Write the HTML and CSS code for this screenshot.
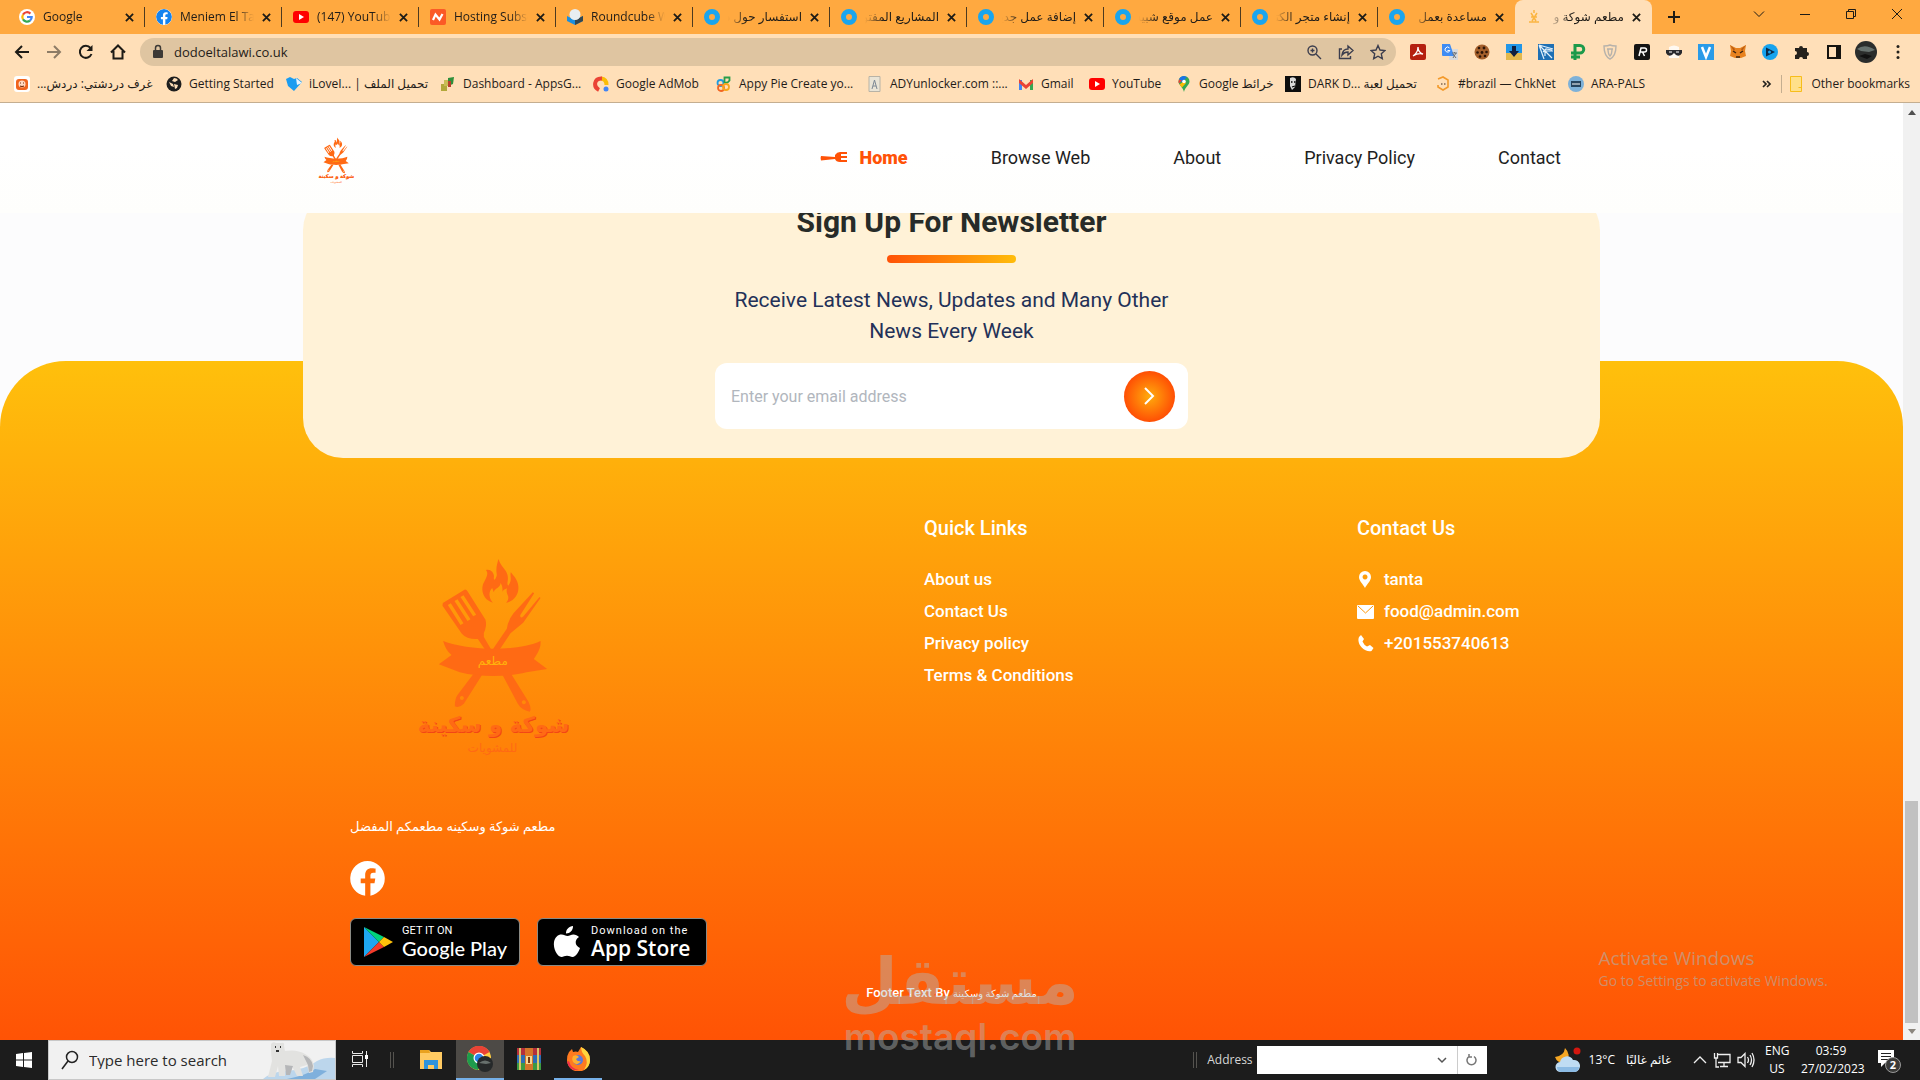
FILE: index.html
```html
<!DOCTYPE html>
<html lang="en">
<head>
<meta charset="utf-8">
<title>مطعم شوكة وسكينة</title>
<link rel="stylesheet" href="styles.css">
</head>
<body>
<svg class="defs" aria-hidden="true">
  <symbol id="x" viewBox="0 0 10 10"><path d="M1 1l8 8M9 1L1 9" stroke="#1d1b16" stroke-width="2" fill="none"/></symbol>
  <symbol id="ring" viewBox="0 0 16 16"><circle cx="8" cy="8" r="5.500" fill="none" stroke="#1aa5ee" stroke-width="5"/></symbol>
  <symbol id="yt" viewBox="0 0 16 16"><rect y="2" width="16" height="12" rx="3" fill="#f00"/><path d="M6 5l5 3-5 3z" fill="#fff"/></symbol>
  <symbol id="fb" viewBox="0 0 36 36"><path fill="currentColor" fill-rule="evenodd" d="M18 0a18 18 0 0 1 3 35.700V23h4.200l.8-5h-5v-3.200c0-1.500.8-2.800 3-2.800h2.300V7.800s-2-.4-4-.4c-4.200 0-6.700 2.500-6.700 7V18H11v5h4.600v12.800A18 18 0 0 1 18 0z"/></symbol>
  <symbol id="logo" viewBox="240 80 500 600">
    <g fill="#ff6a14">
      <path d="M502 86c-6 20-8 30-5 48-2 12-10 20-9 8 3-14-10-28-24-23 12 12-4 30-9 45-6 24 6 46 30 53-12-14-14-32-2-44l5 13c2-14 20-12 20-28 6 8 6 16 6 26 4-8 10-8 14-10-4 8 0 16 3 24 2 8-2 14-6 20 28-8 40-30 36-54-2-16-14-28-22-38-4 10 6 24-8 40-6-8 2-14-2-32-4-18-20-24-27-48z"/>
      <path fill-rule="evenodd" d="M335 218l65-40q6-1 9 5l54 85q5 18-5 40v12l26 44-14 6-30-44q-32 2-48-16l-58-84zM350 224l38 60 9-5-38-60zM370 212l39 60 9-5-39-60zM388 200l38 58 9-5-38-58z"/>
      <path fill-rule="evenodd" d="M605 186l4 3-42 66q0 12 10 3l48-58 3 3-52 74-38 32-36 54-16-8 41-60q4-26 20-46z"/>
      <path d="M336 332c70 28 220 34 292 0 2 20-8 36-20 54l40 30-62 10c-50 14-140 16-200 0l-63-24 38-28q-18-14-25-42z"/>
      <path fill-rule="evenodd" d="M426 432h28l-56 88q-14 14-27 8 0-24 8-34zM392 497a6 6 0 1 0 .1 0z"/>
      <path fill-rule="evenodd" d="M514 434h28l50 80q10 22 4 30-26-6-36-24zM578 510a6 6 0 1 0 .1 0z"/>
    </g>
    <text x="485" y="404" class="logo-small">مطعم</text>
    <text x="490" y="608" class="logo-name logo-name-shade">شوكة و سكينة</text>
    <text x="487" y="605" class="logo-name">شوكة و سكينة</text>
    <text x="484" y="666" class="logo-sub">للمشويات</text>
  </symbol>
</svg>

<header class="browser">
  <div class="tabs">
    <div class="tab"><svg class="fav" viewBox="0 0 16 16"><circle cx="8" cy="8" r="8" fill="#fff"/><g fill="none" stroke-width="2.200"><path d="M11.400 4.600A4.700 4.700 0 0 0 4 5.600" stroke="#ea4335"/><path d="M4 5.600a4.700 4.700 0 0 0 0 4.800" stroke="#fbbc05"/><path d="M4 10.400a4.700 4.700 0 0 0 7 1.200" stroke="#34a853"/><path d="M11 11.600A4.700 4.700 0 0 0 12.700 8H8" stroke="#4285f4"/></g></svg><span class="tab-name">Google</span><svg class="close"><use href="#x"/></svg></div>
    <div class="tab"><svg class="fav blue"><use href="#fb"/></svg><span class="tab-name">Meniem El Talawi</span><svg class="close"><use href="#x"/></svg></div>
    <div class="tab"><svg class="fav"><use href="#yt"/></svg><span class="tab-name">(147) YouTube</span><svg class="close"><use href="#x"/></svg></div>
    <div class="tab"><svg class="fav" viewBox="0 0 16 16"><rect width="16" height="16" rx="2" fill="#fb5a26"/><path d="M3 11l2.500-5.500L9.500 10.500 12.500 5" fill="none" stroke="#fff" stroke-width="2.200"/></svg><span class="tab-name">Hosting Subscription</span><svg class="close"><use href="#x"/></svg></div>
    <div class="tab"><svg class="fav" viewBox="0 0 16 16"><path d="M0 7l8 4 8-4v5l-8 4-8-4z" fill="#1a8fe0"/><path d="M8 11l8-4v5l-8 4z" fill="#35474f"/><circle cx="8" cy="5.500" r="5.500" fill="#e8eef2"/></svg><span class="tab-name">Roundcube Webmail</span><svg class="close"><use href="#x"/></svg></div>
    <div class="tab rtl"><svg class="fav"><use href="#ring"/></svg><span class="tab-name">استفسار حول دو</span><svg class="close"><use href="#x"/></svg></div>
    <div class="tab rtl"><svg class="fav"><use href="#ring"/></svg><span class="tab-name">المشاريع المفتو</span><svg class="close"><use href="#x"/></svg></div>
    <div class="tab rtl"><svg class="fav"><use href="#ring"/></svg><span class="tab-name">إضافة عمل جديد</span><svg class="close"><use href="#x"/></svg></div>
    <div class="tab rtl"><svg class="fav"><use href="#ring"/></svg><span class="tab-name">عمل موقع شبيه</span><svg class="close"><use href="#x"/></svg></div>
    <div class="tab rtl"><svg class="fav"><use href="#ring"/></svg><span class="tab-name">إنشاء متجر الكتر</span><svg class="close"><use href="#x"/></svg></div>
    <div class="tab rtl last"><svg class="fav"><use href="#ring"/></svg><span class="tab-name">مساعدة بعمل</span><svg class="close"><use href="#x"/></svg></div>
    <div class="tab rtl active"><svg class="fav" viewBox="0 0 16 16" fill="none" stroke="#fbb540" stroke-width="1.500"><path d="M5 4l5 8M11 4l-5 8M5 8h6M8 1v3M3 13h10"/></svg><span class="tab-name">مطعم شوكة و</span><svg class="close"><use href="#x"/></svg></div>
    <button class="new-tab" aria-label="New tab"><svg width="14" height="14" viewBox="0 0 14 14"><path d="M7 1v12M1 7h12" stroke="#1d1b16" stroke-width="2"/></svg></button>
    <div class="window-controls">
      <button aria-label="Search tabs"><svg viewBox="0 0 12 12"><path d="M1 3.500l5 5 5-5"/></svg></button>
      <button aria-label="Minimize"><svg viewBox="0 0 12 12"><path d="M1 6.500h10"/></svg></button>
      <button aria-label="Restore"><svg viewBox="0 0 12 12"><path d="M1.500 3.500h7v7h-7zM3.500 3.500v-2h7v7h-2"/></svg></button>
      <button aria-label="Close"><svg viewBox="0 0 12 12"><path d="M1 1l10 10M11 1L1 11"/></svg></button>
    </div>
  </div>

  <div class="toolbar">
    <div class="nav-buttons">
      <button aria-label="Back"><svg viewBox="0 0 16 16"><path d="M15 8H2M8 2L2 8l6 6"/></svg></button>
      <button aria-label="Forward" class="dim"><svg viewBox="0 0 16 16"><path d="M1 8h13M8 2l6 6-6 6"/></svg></button>
      <button aria-label="Reload"><svg viewBox="0 0 16 16"><path d="M13.500 10A6 6 0 1 1 12.500 4"/><path d="M14.500 1v6h-6z" fill="#1d1b16" stroke="none"/></svg></button>
      <button aria-label="Home page"><svg viewBox="0 0 16 16"><path d="M1 8.500L8 1.500l7 7M3.500 7v7.500h9V7"/></svg></button>
    </div>
    <div class="omnibox">
      <svg width="12" height="16" viewBox="0 0 12 16"><rect x="1" y="6" width="10" height="8" rx="1" fill="#3d3a36"/><path d="M3.500 6V4a2.500 2.500 0 0 1 5 0v2" fill="none" stroke="#3d3a36" stroke-width="1.500"/></svg>
      <input type="text" value="dodoeltalawi.co.uk" aria-label="Address and search bar">
      <svg class="omni-icon" viewBox="0 0 16 16"><circle cx="6.500" cy="6.500" r="4.500"/><path d="M10 10l5 5M4.500 6.500h4M6.500 4.500v4"/></svg>
      <svg class="omni-icon" viewBox="0 0 16 16"><path d="M4 5H1.500v9.500h11V12M4 11c.5-4 3-6 6-6V2l5 4.500-5 4.500V8c-3 0-4.500 1-6 3z"/></svg>
      <svg class="omni-icon" viewBox="0 0 16 16"><path d="M8 1.500l2 4.500 5 .5-3.700 3.300 1 4.900L8 12.200l-4.300 2.500 1-4.900L1 6.500 6 6z"/></svg>
    </div>
    <div class="extensions">
      <svg viewBox="0 0 16 16"><rect width="16" height="16" rx="2" fill="#b5200f"/><path d="M3 12c3-2 5-5 5-9 0 4 2 6 5 7-4-1-7 0-10 2z" fill="none" stroke="#fff" stroke-width="1.300"/></svg>
      <svg viewBox="0 0 16 16"><rect x="7" y="5" width="9" height="11" fill="#d8dadd"/><path d="M0 0h8l4 12H1a1 1 0 0 1-1-1z" fill="#3f8cf3"/><path d="M7.500 4a2.500 2.500 0 1 0 .4 2.500H5.500" fill="none" stroke="#fff"/><path d="M10 9h5M12.500 8v1M14 9l-3 5M11 10l3 4" stroke="#6b7075" fill="none"/></svg>
      <svg viewBox="0 0 16 16"><circle cx="8" cy="8" r="7.500" fill="#a5602c"/><g fill="#2c1508"><circle cx="5" cy="4" r="1.300"/><circle cx="10" cy="4" r="1.400"/><circle cx="3.500" cy="8.500" r="1.300"/><circle cx="8" cy="8.500" r="1.400"/><circle cx="12.500" cy="8" r="1.300"/><circle cx="6" cy="12.500" r="1.300"/><circle cx="11" cy="12" r="1.300"/></g></svg>
      <svg viewBox="0 0 16 16"><rect width="16" height="9" fill="#2196e8"/><path d="M0 9l16 0v7H0z" fill="#e3b84a"/><path d="M6 2h4v5h3l-5 6-5-6h3z" fill="#10203f"/></svg>
      <svg viewBox="0 0 16 16"><rect width="16" height="16" fill="#1e6fb4"/><path d="M1 1l14 4M1 1l5 14M2 2l12 12M5 8l3-3 6 1M7 12V7h8" stroke="#e3f0fa" fill="none" stroke-width="1.200"/></svg>
      <svg viewBox="0 0 16 16"><path d="M5 16V1.500h5a3.500 3.500 0 0 1 0 7.500H1M1 13h9" fill="none" stroke="#1c9a4b" stroke-width="3"/></svg>
      <svg viewBox="0 0 16 16"><path d="M8 1c2 1 4 1 6 1 0 7-2 11-6 13C4 13 2 9 2 2c2 0 4 0 6-1zM5 5h6M6 5c0 4 1 6 2 7 1-1 2-3 2-7" fill="none" stroke="#b7b2ab" stroke-width="1.400"/></svg>
      <svg viewBox="0 0 16 16"><rect width="16" height="16" rx="2" fill="#141414"/><path d="M5 12L7 4h3.500a2 2 0 0 1 0 4H6M8.500 8l2 4" fill="none" stroke="#fff" stroke-width="1.500"/></svg>
      <svg viewBox="0 0 16 16"><path d="M3 3q5-3 10 0v11H3z" fill="#fff" opacity=".8"/><path d="M0 6h16v3q-2 4-6 2L8 9 6 11Q2 13 0 9z" fill="#2a2a2e"/><path d="M3 8h3M10 8h3" stroke="#fff"/></svg>
      <svg viewBox="0 0 16 16"><rect width="16" height="16" fill="#2a9be8"/><path d="M4 3l4 10 4-10" fill="none" stroke="#fff" stroke-width="2.500"/></svg>
      <svg viewBox="0 0 16 16"><path d="M0 1l6 3h4l6-3-1 6 1 5-5 2H5l-5-2 1-5z" fill="#e8821e"/><path d="M3 7l3 2M13 7l-3 2M6 13h4" stroke="#3a2312" stroke-width="1.500"/><path d="M0 1l5 4-1 2zM16 1l-5 4 1 2z" fill="#b65a13"/></svg>
      <svg viewBox="0 0 16 16"><circle cx="8" cy="8" r="8" fill="#17a3ee"/><path d="M4 3.500L13 8l-9 4.500z" fill="#0b2b4a"/><circle cx="7.500" cy="8" r="1.500" fill="#17a3ee"/></svg>
      <svg viewBox="0 0 16 16"><path d="M1 4h4a2 2 0 1 1 4 0h4v4a2 2 0 1 1 0 4v3H9a2 2 0 1 0-4 0H1v-4a2 2 0 1 0 0-4z" fill="#24211c"/></svg>
      <svg viewBox="0 0 16 16"><path d="M2 2h12v12H2z" fill="none" stroke="#15130f" stroke-width="2"/><path d="M10 2h4v12h-4z" fill="#15130f"/></svg>
      <svg class="avatar" viewBox="0 0 22 22"><circle cx="11" cy="11" r="11" fill="#2b2d2c"/><path d="M2 8q8-6 18 1l-6 2-8-1z" fill="#66716e"/><path d="M4 15l6-2 7 2-5 3z" fill="#111"/></svg>
      <svg viewBox="0 0 16 16" fill="#24211c"><circle cx="8" cy="2.500" r="1.500"/><circle cx="8" cy="8" r="1.500"/><circle cx="8" cy="13.500" r="1.500"/></svg>
    </div>
  </div>

  <div class="bookmarks">
    <nav class="bookmark-list" aria-label="Bookmarks">
      <a href="#"><svg viewBox="0 0 16 16"><rect width="16" height="16" rx="3" fill="#fff"/><rect x="2" y="3" width="12" height="11" rx="3" fill="#f0641e"/><circle cx="8" cy="8" r="3.500" fill="#ffd9c2"/><path d="M6 7h1M9 7h1M6 10q2 1 4 0" stroke="#7b2a06"/></svg><span dir="rtl">غرف دردشتي: دردش...</span></a>
      <a href="#"><svg viewBox="0 0 16 16"><circle cx="8" cy="8" r="7.500" fill="#1e1e1e"/><path d="M8 2q3 0 4 2L9 6 6 5zM3 6l4 2 1 3-3-1zM8 8l4 1-1 3-2 1z" fill="#ffdfb8"/></svg><span>Getting Started</span></a>
      <a href="#"><svg viewBox="0 0 16 16"><path d="M0 3l4-2 4 2 3-1 5 4-8 9L2 10z" fill="#1b9cf0"/><path d="M10 2l6 5-5 2z" fill="#e8f4fd"/></svg><span>iLoveI... | تحميل الملف</span></a>
      <a href="#"><svg viewBox="0 0 16 16"><path d="M1 8h6v7H1z" fill="#b2a83a"/><path d="M4 4h5v6H4z" fill="#c9bd55"/><path d="M8 2l6-1-1 7-5 2z" fill="#2f8f3a"/><path d="M8 5h3v6H8z" fill="#b8402c"/></svg><span>Dashboard - AppsG...</span></a>
      <a href="#"><svg viewBox="0 0 16 16" fill="none" stroke-width="4"><path d="M8 2.500Q13.500 3 13.500 9" stroke="#fbbc04"/><path d="M9 2.500C1 2 0 11 6 14" stroke="#ea4335"/><circle cx="13" cy="13" r="2.500" fill="#4285f4" stroke="none"/></svg><span>Google AdMob</span></a>
      <a href="#"><svg viewBox="0 0 16 16" fill="none" stroke-width="1.800"><circle cx="4.500" cy="7" r="3" stroke="#1f9be0"/><path d="M8.500 1.500h5v3q-2 3-5 2z" stroke="#2a9d4a"/><circle cx="5" cy="12" r="3" stroke="#f26522"/><circle cx="10" cy="11" r="3" stroke="#f7a51b"/></svg><span>Appy Pie Create yo...</span></a>
      <a href="#"><svg viewBox="0 0 16 16"><path d="M2 .5h11v15H2z" fill="#e9e4d6" stroke="#b8b3a6"/><path d="M5 13l2.500-9L10 13M6 10h3" fill="none" stroke="#7c8894"/></svg><span>ADYunlocker.com ::...</span></a>
      <a href="#"><svg viewBox="0 0 16 16"><path d="M1 4h3v10H1z" fill="#4285f4"/><path d="M12 4h3v10h-3z" fill="#34a853"/><path d="M1 3l7 6 7-6v4l-7 6-7-6z" fill="#ea4335"/></svg><span>Gmail</span></a>
      <a href="#"><svg><use href="#yt"/></svg><span>YouTube</span></a>
      <a href="#"><svg viewBox="0 0 16 16"><path d="M8 0a5.500 5.500 0 0 1 5.500 5.500C13.500 9 9 11 8 16 7 11 2.500 9 2.500 5.500A5.500 5.500 0 0 1 8 0z" fill="#34a853"/><path d="M8 0a5.500 5.500 0 0 0-5 3.500l3 3L11 1z" fill="#1a73e8"/><path d="M3 3.500q-1 2 0 4l3-3z" fill="#ea4335"/><path d="M3.500 8.500L8 5l2 2-4 4.500z" fill="#fbbc04"/><circle cx="8" cy="5.500" r="1.800" fill="#fff"/></svg><span>Google خرائط</span></a>
      <a href="#"><svg viewBox="0 0 16 16"><rect width="16" height="16" fill="#0d0d0d"/><path d="M5 2q4-2 6 1l-1 8-3 3-2-4z" fill="#d9d9d9"/><path d="M6 6h1.500M9 6h1.500M7 11l3-1" stroke="#000" stroke-width="1.300"/></svg><span>DARK D... تحميل لعبة</span></a>
      <a href="#"><svg viewBox="0 0 16 16"><path d="M3 3L8 1l5 3v7l-5 3-5-3V9" fill="none" stroke="#f39a2b" stroke-width="1.600"/><path d="M6 8h1.500M9 8h1.500" stroke="#7d6650" stroke-width="1.500"/></svg><span>#brazil — ChkNet</span></a>
      <a href="#"><svg viewBox="0 0 16 16"><circle cx="8" cy="8" r="8" fill="#7eb1d8"/><rect x="3" y="5" width="10" height="6" fill="#26445e"/><path d="M4 8h8" stroke="#fff"/></svg><span>ARA-PALS</span></a>
    </nav>
    <button class="more" aria-label="More bookmarks"><svg viewBox="0 0 10 8" width="10" height="8"><path d="M1 1l3 3-3 3M5 1l3 3-3 3" fill="none" stroke="#24211c" stroke-width="1.700"/></svg></button>
    <a class="other" href="#"><svg viewBox="0 0 16 16"><path d="M2.500 .5h11v15h-11z" fill="#ffe08a" stroke="#f7bd1b"/><path d="M10.500 11.500h3" stroke="#f7bd1b"/></svg><span>Other bookmarks</span></a>
  </div>
</header>

<div class="viewport">
  <div class="site">
    <header class="site-header">
      <div class="container site-bar">
        <a href="#" aria-label="Restaurant home"><svg class="brand"><use href="#logo"/></svg></a>
        <nav class="menu" aria-label="Main">
          <a class="current" href="#"><svg width="28" height="12" viewBox="0 0 28 12"><path d="M1 4l14 1V3q2-3 5-3h7v2h-6v2h6v2h-6v2h6v2h-7q-4 0-5-3L1 8.500q-1-2 0-4.500z" fill="#ff5207"/></svg>Home</a>
          <a href="#">Browse Web</a>
          <a href="#">About</a>
          <a href="#">Privacy Policy</a>
          <a href="#">Contact</a>
        </nav>
      </div>
    </header>

    <section class="container newsletter">
      <h2>Sign Up For Newsletter</h2>
      <div class="rule"></div>
      <p>Receive Latest News, Updates and Many Other News Every Week</p>
      <form class="signup">
        <input type="email" placeholder="Enter your email address" aria-label="Email address">
        <button type="button" aria-label="Subscribe"><svg width="12" height="20" viewBox="0 0 12 20"><path d="M2 2l8 8-8 8" fill="none" stroke="#fff" stroke-width="2"/></svg></button>
      </form>
    </section>

    <footer class="site-footer">
      <div class="container columns">
        <div class="about">
          <svg class="footer-logo"><use href="#logo"/></svg>
          <p class="tagline" dir="rtl">مطعم شوكة وسكينه مطعمكم المفضل</p>
          <a class="social" href="#" aria-label="Facebook"><svg width="36" height="36"><use href="#fb"/></svg></a>
          <div class="stores">
            <a class="store" href="#"><svg width="30" height="32" viewBox="0 0 30 32"><path d="M1 1v30l15-15z" fill="#1ea7f2"/><path d="M1 1l20 10-5 5z" fill="#00d37c"/><path d="M1 31l20-10-5-5z" fill="#f43b2b"/><path d="M16 16l5-5 9 5-9 5z" fill="#ffc10a"/></svg><span class="store-text"><small>GET IT ON</small><b class="google">Google Play</b></span></a>
            <a class="store apple-store" href="#"><svg width="28" height="32" viewBox="0 0 28 32"><path fill="#fff" d="M20 0c.3 4-3 7.500-7 7.500C12.700 3.800 16 .3 20 0zM26 11c-5 3-4 9 1 11-1 3-4 9-7.500 9-2 0-3-1.200-5.500-1.200S10.500 31 8.500 31C4 31 0 22 1 16c1-5 4-7.500 7.500-7.500 2.500 0 4 1.400 6 1.400s3.500-1.400 6-1.400c2 0 4 1 5.500 2.500z"/></svg><span class="store-text"><small class="wide">Download on the</small><b>App Store</b></span></a>
          </div>
        </div>
        <nav aria-labelledby="quick">
          <h3 id="quick">Quick Links</h3>
          <ul>
            <li><a href="#">About us</a></li>
            <li><a href="#">Contact Us</a></li>
            <li><a href="#">Privacy policy</a></li>
            <li><a href="#">Terms &amp; Conditions</a></li>
          </ul>
        </nav>
        <div>
          <h3>Contact Us</h3>
          <ul class="contact">
            <li><svg viewBox="0 0 17 17"><path fill="#fff" fill-rule="evenodd" d="M8 0a6 6 0 0 1 6 6c0 4-4 7-6 11-2-4-6-7-6-11a6 6 0 0 1 6-6zM8 3.500a2.500 2.500 0 1 0 .1 0z"/></svg>tanta</li>
            <li><svg viewBox="0 0 17 17"><rect y="2" width="17" height="14" rx="1" fill="#fff"/><path d="M1 3l7.500 7L16 3" fill="none" stroke="#ff990a"/></svg>food@admin.com</li>
            <li><svg viewBox="0 0 17 17"><path fill="#fff" d="M2 2l2-2 3 4-1.500 2.500q1.500 3.500 4.500 5L13 10l3.500 3-2 3C8 18-1 9 2 2z"/></svg>+201553740613</li>
          </ul>
        </div>
      </div>
      <p class="copyright">Footer Text By <span>مطعم شوكة وسكينة</span></p>
    </footer>
    <div class="activate"><div class="activate-title">Activate Windows</div><div>Go to Settings to activate Windows.</div></div>
  </div>
  <div class="scrollbar" aria-hidden="true"><i class="arrow up"></i><i class="thumb"></i><i class="arrow down"></i></div>
</div>

<footer class="taskbar">
  <button class="start" aria-label="Start"><svg width="16" height="16" viewBox="0 0 16 16" fill="#fff"><path d="M0 2l7-1v6.500H0zM8 1l8-1v7.500H8zM0 8.500h7V15l-7-1zM8 8.500h8V16l-8-1z"/></svg></button>
  <label class="search"><svg width="18" height="20" viewBox="0 0 18 20"><circle cx="11" cy="7" r="5.500" fill="none" stroke="#222" stroke-width="1.500"/><path d="M7 11l-6 8" stroke="#222" stroke-width="1.500"/></svg><input type="text" placeholder="Type here to search" aria-label="Search">
    <svg width="72" height="38" viewBox="0 0 72 38"><path d="M0 38q10-8 24-8 20-2 30-10 8-4 18-3v21z" fill="#bcd6ec"/><path d="M24 38q20-4 28-10l12 2-12 8z" fill="#7fb0dc"/><path d="M8 3q2-3 5-1h5q4-1 3 3l1 5q12-2 20 3 8 4 9 12l-1 6-4 1-2-8-7 2 3 9h-6l-5-10-6 1-1 9h-6l-1-10-3 11h-7l4-16q-1-7-1-12z" fill="#e2e2e0"/><path d="M40 14q9 3 10 11l-1 5-3 1-1-7zM22 24l8 1-3 9h-4z" fill="#b5b6b8"/><path d="M12 6h1M17 6h1M13 10h3" stroke="#333" stroke-width="2"/></svg></label>
  <button class="app task-view" aria-label="Task view"><svg width="16" height="16" viewBox="0 0 16 16" fill="none" stroke="#e8e8e8"><path d="M.5 0v2.500h10V0M.5 16v-2.500h10V16M.5 4.500h10v7H.5zM14.500 0v16"/><path d="M13 4h3v4h-3z" fill="#fff" stroke="none"/></svg></button>
  <i class="grip"></i>
  <button class="app" aria-label="File Explorer"><svg width="24" height="24" viewBox="0 0 24 24"><path d="M1 3h9l2 2h11v17H1z" fill="#ffca62"/><path d="M1 3h9l1 3H1z" fill="#e9a21f"/><path d="M5 13h14v9h-4v-4H9v4H5z" fill="#2f93dc"/></svg></button>
  <button class="app running focused" aria-label="Chrome"><svg width="26" height="26" viewBox="0 0 26 26"><circle cx="12" cy="12" r="12" fill="#ffcd43"/><path d="M12 12L1.500 6A12 12 0 0 1 22.500 6z" fill="#ea4335"/><path d="M12 12L1.500 6A12 12 0 0 0 11 24l4-8z" fill="#1e9b4c"/><circle cx="12" cy="12" r="5.500" fill="#fff"/><circle cx="12" cy="12" r="4.300" fill="#2a84ea"/><circle cx="18" cy="18" r="8" fill="#26292a"/><path d="M12 17q6-5 12 0l-5 1z" fill="#67706d"/></svg></button>
  <button class="app" aria-label="WinRAR"><svg width="24" height="24" viewBox="0 0 24 24"><path d="M0 1h24v7H0z" fill="#b5303b"/><path d="M0 8h24v8H0z" fill="#2d6db5"/><path d="M0 16h24v7H0z" fill="#3c9a42"/><path d="M3 1v22M21 1v22" stroke="#d9c56a" stroke-width="2"/><path d="M8 1h8v22H8z" fill="#d4762a"/><path d="M9 9h6v8H9z" fill="#f5d791"/><path d="M11 10h2v6h-2z" fill="#7a3a12"/></svg></button>
  <button class="app running" aria-label="Firefox"><svg width="24" height="24" viewBox="0 0 24 24"><path d="M3 5l3-3 1 3q3-1 5 0l3-5q9 4 9 13a11.500 11.500 0 0 1-23 0q0-5 2-8z" fill="#ff7a1f"/><path d="M15 0q9 4 9 13 0 7-6 10 5-8 1-14-4-4-4-9z" fill="#ffd53e"/><path d="M3 14q2 8 10 9-9 2-12-8z" fill="#f0304a"/><circle cx="12" cy="13" r="5" fill="#5d79d8"/><path d="M7 9q4-2 6 1l-3 2q1 3 5 2-3 5-7 2-3-3-1-7z" fill="#ffb02e"/></svg></button>
  <i class="grip address-grip"></i>
  <label class="address"><span>Address</span><span class="address-box"><input type="text" aria-label="Address"><svg width="10" height="8" viewBox="0 0 10 8"><path d="M1 2l4 4 4-4" fill="none" stroke="#555" stroke-width="1.500"/></svg><button aria-label="Refresh"><svg width="12" height="12" viewBox="0 0 12 12"><path d="M3 2.500a4.500 4.500 0 1 0 5 0M3 0v3h3" fill="none" stroke="#777" stroke-width="1.500"/></svg></button></span></label>
  <div class="tray">
    <svg width="28" height="26" viewBox="0 0 28 26"><path d="M10 1q-1 8-10 9 3 8 12 5 4-8-2-14z" fill="#f5a623"/><path d="M6 25a5 5 0 0 1-1-10 7 7 0 0 1 13-2 6 6 0 0 1 2 12z" fill="#bfdcf3"/><path d="M6 25a5 5 0 0 1-4-5h22q0 4-4 5z" fill="#8cbbe4"/><circle cx="22" cy="4" r="3.500" fill="#d3170f"/></svg>
    <span class="temp">13°C</span><span class="weather">غائم غالبًا</span>
    <svg class="tray-icon" width="14" height="10" viewBox="0 0 14 10"><path d="M1 8l6-6 6 6"/></svg>
    <svg class="tray-icon" width="18" height="16" viewBox="0 0 18 16"><path d="M5 2.500h12v8H5M11 10.500V14M7 14.500h8M1.500 1v5h3V1M3 6v9h3"/></svg>
    <svg class="tray-icon" width="18" height="16" viewBox="0 0 18 16"><path d="M1 5.500h3l4-4v13l-4-4H1zM10.500 5q2 3 0 6M13 3q3 5 0 10M15 1q4 7 0 14"/></svg>
    <span class="lang">ENG<br>US</span>
    <span class="clock">03:59<br>27/02/2023</span>
    <span class="notice"><svg width="18" height="18" viewBox="0 0 18 18"><path d="M1 1h16v13H8l-4 4v-4H1z" fill="#fff"/><path d="M4 4.500h10M4 7.500h10M4 10.500h7" stroke="#222"/></svg><b>2</b></span>
  </div>
</footer>

<div class="watermark" aria-hidden="true"><div class="wm-mark">مستقل</div><div class="wm-site">mostaql.com</div></div>
</body>
</html>
```

FILE: styles.css
```css
* { box-sizing: border-box; }
body {
  margin: 0;
  min-height: 100vh;
  display: flex;
  flex-direction: column;
  position: relative;
  font-family: Roboto, "DejaVu Sans", sans-serif;
  background: #fff;
}
a { color: inherit; text-decoration: none; }
button { border: 0; padding: 0; background: none; font: inherit; display: flex; align-items: center; justify-content: center; }
h2, h3, p, ul { margin: 0; padding: 0; }
ul { list-style: none; }
input { border: 0; padding: 0; background: none; font: inherit; min-width: 0; outline: 0; }
svg { flex: none; }
.defs { position: absolute; width: 0; height: 0; }

/* Browser chrome */
.browser { background: #ffdfb8; border-bottom: 1px solid #c4ae90; font: 12px/16px "Open Sans", "DejaVu Sans", sans-serif; color: #1f1c18; }
.tabs { display: flex; height: 34px; background: #ffa940; padding-left: 8px; }
.tab { flex: 0 1 137px; min-width: 0; display: flex; align-items: center; gap: 8px; padding: 0 11px; position: relative; }
.tab::after { content: ""; position: absolute; right: 0; top: 7px; height: 20px; width: 1px; background: #4d3a20; }
.tab.last::after, .tab.active::after { display: none; }
.tab.active { background: #ffdfb8; border-radius: 8px 8px 0 0; }
.fav { width: 16px; height: 16px; }
.blue { color: #1683ee; background: #fff; border-radius: 8px; }
.tab-name { flex: 1; min-width: 0; overflow: hidden; white-space: nowrap; mask-image: linear-gradient(to right, #000 75%, transparent); }
.rtl .tab-name { direction: rtl; mask-image: linear-gradient(to left, #000 75%, transparent); }
.close { width: 9px; height: 9px; }
.new-tab { width: 44px; }
.window-controls { display: flex; margin-left: auto; height: 28px; }
.window-controls button { width: 46px; }
.window-controls svg { width: 12px; height: 12px; fill: none; stroke: #1d1b16; }
.toolbar { display: flex; align-items: center; height: 36px; padding: 0 6px; }
.nav-buttons { display: flex; }
.nav-buttons button { width: 32px; height: 32px; }
.nav-buttons svg { width: 16px; height: 16px; fill: none; stroke: #1d1b16; stroke-width: 2; }
.nav-buttons .dim { opacity: .5; }
.omnibox { flex: 1; display: flex; align-items: center; gap: 16px; height: 28px; margin-left: 6px; padding: 0 10px 0 12px; border-radius: 14px; background: #dfc5a1; }
.omnibox input { flex: 1; margin-left: -6px; font-size: 13px; color: #1f1c18; }
.omni-icon { width: 16px; height: 16px; fill: none; stroke: #3b3d4d; stroke-width: 1.4px; }
.extensions { display: flex; align-items: center; margin-left: 6px; }
.extensions svg { width: 16px; height: 16px; margin: 0 8px; }
.extensions .avatar { width: 22px; height: 22px; margin: 0 5px; }
.bookmarks { display: flex; align-items: center; height: 32px; padding: 0 10px 4px 14px; }
.bookmark-list { flex: 1; display: grid; grid-template-columns: 152px 120px 154px 153px 123px 151px 151px 71px 87px 109px 150px 133px 100px; }
.bookmarks a { display: flex; align-items: center; gap: 7px; white-space: nowrap; min-width: 0; }
.bookmarks a svg { width: 16px; height: 16px; }
.more { width: 30px; border-right: 1px solid #c4ae90; height: 18px; }
.other { margin-left: 6px; }

/* Page area */
.viewport { flex: 1; display: flex; }
.site { flex: 1; min-width: 0; position: relative; display: flex; flex-direction: column; background: #fcfcfd; overflow: hidden; }
.container { width: 68.15%; margin: 0 auto; }
.site-header { position: relative; z-index: 3; background: linear-gradient(#fff 40%, #fefefc); }
.site-bar { display: flex; align-items: center; justify-content: space-between; height: 110px; padding: 0 39px 0 14px; }
.brand { width: 39px; height: 47px; display: block; margin-top: 4px; }
.menu { display: flex; gap: 83px; font-size: 18px; line-height: 24px; color: #1e1e22; }
.menu a { display: flex; align-items: center; gap: 12px; }
.menu .current { color: #ff5207; font-weight: 900; }
.newsletter { position: relative; z-index: 2; margin-top: -23px; margin-bottom: -97px; height: 268px; padding-top: 16px; border-radius: 40px; background: #fff2d7; display: flex; flex-direction: column; align-items: center; text-align: center; }
.newsletter h2 { font-size: 30px; line-height: 32px; color: #272b28; font-weight: 700; }
.rule { width: 129px; height: 8px; margin: 17px 0 22px; border-radius: 4px; background: linear-gradient(90deg, #ff5207, #ffbd0b); }
.newsletter p { width: 472px; font-size: 21px; line-height: 31px; color: #233158; }
.signup { display: flex; align-items: center; width: 473px; height: 66px; margin-top: 16px; padding: 0 13px 0 16px; border-radius: 12px; background: #fff; }
.signup input { flex: 1; font-size: 16px; }
.signup input::placeholder { color: #b1b6bd; }
.signup button { width: 51px; height: 51px; border-radius: 50%; background: radial-gradient(circle, #ffac0c, #ff4d04 72%); }
.site-footer { flex: 1; padding-top: 153px; border-radius: 66px 66px 0 0; background: linear-gradient(#ffc00c, #ff5305); color: #fff; }
.columns { display: grid; grid-template-columns: 574fr 433fr 243fr; padding-left: 47px; font-size: 17px; }
.columns h3 { font-size: 20px; font-weight: 500; line-height: 28px; margin-bottom: 21px; }
.columns li { line-height: 32px; font-weight: 500; }
.contact li { display: flex; align-items: center; gap: 10px; }
.contact svg { width: 17px; height: 17px; }
.footer-logo { display: block; width: 167px; height: 200px; margin: 43px 0 58px 61px; }
.tagline { text-align: left; font-size: 13px; line-height: 24px; margin-bottom: 22px; }
.social svg { display: block; width: 35px; height: 35px; }
.stores { display: flex; gap: 17px; margin-top: 22px; }
.store { width: 170px; height: 48px; display: flex; align-items: center; gap: 9px; padding-left: 12px; border: 1px solid #8a8a84; border-radius: 6px; background: #000; color: #fff; }
.apple-store { padding-left: 15px; gap: 10px; }
.store-text { display: flex; flex-direction: column; }
.store small { font-size: 11px; line-height: 12px; }
.store .wide { letter-spacing: 1px; }
.store b { font: 600 21px/22px "Open Sans", sans-serif; }
.store .google { font: 500 20px/22px Lato, sans-serif; }
.copyright { margin-top: 17px; text-align: center; font-size: 13px; line-height: 20px; font-weight: 500; }
.copyright span { font-size: 10px; }
.activate { position: absolute; left: 84%; bottom: 49px; font: 14px/20px "Open Sans", sans-serif; color: rgba(190, 160, 140, .75); }
.activate-title { font-size: 19px; line-height: 26px; }
.logo-small, .logo-name, .logo-sub { font-family: "DejaVu Sans", sans-serif; text-anchor: middle; }
.logo-small { font-size: 36px; fill: #ffb20c; }
.logo-name { font-size: 64px; font-weight: 700; fill: #ff6a14; }
.logo-name-shade { fill: #f24616; }
.logo-sub { font-size: 36px; fill: #ff6a14; }
.scrollbar { width: 17px; background: #f1f1f1; display: flex; flex-direction: column; align-items: center; }
.arrow { margin: 7px 0; border: 4px solid transparent; }
.up { border-top: 0; border-bottom: 5px solid #505050; }
.down { border-bottom: 0; border-top: 5px solid #8b867e; margin: 6px 0; }
.thumb { width: 13px; height: 222px; margin-top: auto; background: #c1c1c1; }

/* Taskbar */
.taskbar { display: flex; align-items: center; height: 40px; background: #1c1c1c; color: #fff; font: 12px/18px "Open Sans", "DejaVu Sans", sans-serif; }
.start { width: 48px; height: 40px; }
.search { display: flex; align-items: center; width: 288px; height: 40px; padding-left: 12px; gap: 10px; background: #f1f1f1; border: 1px solid #c8c8c8; font-size: 15px; }
.search input { flex: 1; }
.search input::placeholder { color: #2b2b2b; }
.app { width: 48px; height: 40px; border-bottom: 2px solid transparent; margin-right: 1px; }
.task-view { margin-right: 6px; }
.running { border-bottom-color: #76b0e8; }
.focused { background: #4d4a46; }
.grip { width: 4px; height: 16px; margin: 0 13px 0 0; border: solid #55534f; border-width: 0 1px; }
.address-grip { margin: 0 10px 0 auto; }
.address { display: flex; align-items: center; gap: 4px; color: #d6d6d6; }
.address-box { display: flex; align-items: center; width: 230px; height: 28px; background: #fff; }
.address-box input { flex: 1; }
.address-box button { width: 30px; height: 28px; margin-left: 10px; border-left: 1px solid #ccc; }
.tray { display: flex; align-items: center; padding-left: 68px; }
.temp { margin: 0 11px 0 6px; }
.weather { width: 53px; white-space: nowrap; }
.tray-icon { fill: none; stroke: #eee; stroke-width: 1.3px; margin-left: 6px; }
.weather + .tray-icon { margin-left: 14px; }
.lang, .clock { text-align: center; margin-left: 10px; }
.lang { width: 24px; }
.clock { width: 60px; margin-left: 12px; }
.notice { position: relative; width: 22px; height: 22px; margin: 0 21px 0 16px; }
.notice b { position: absolute; left: 8px; top: 8px; width: 16px; height: 16px; border-radius: 8px; background: #3a3a38; border: 1px solid #999; font-size: 11px; line-height: 14px; text-align: center; }

/* Site mark laid over the screen */
.watermark { position: absolute; left: 0; bottom: 24px; z-index: 5; width: 100%; text-align: center; color: rgba(180, 185, 185, .45); pointer-events: none; }
.wm-mark { font: 700 65px/72px "DejaVu Sans", sans-serif; }
.wm-site { font: 600 37px/38px Inter, sans-serif; }
```
